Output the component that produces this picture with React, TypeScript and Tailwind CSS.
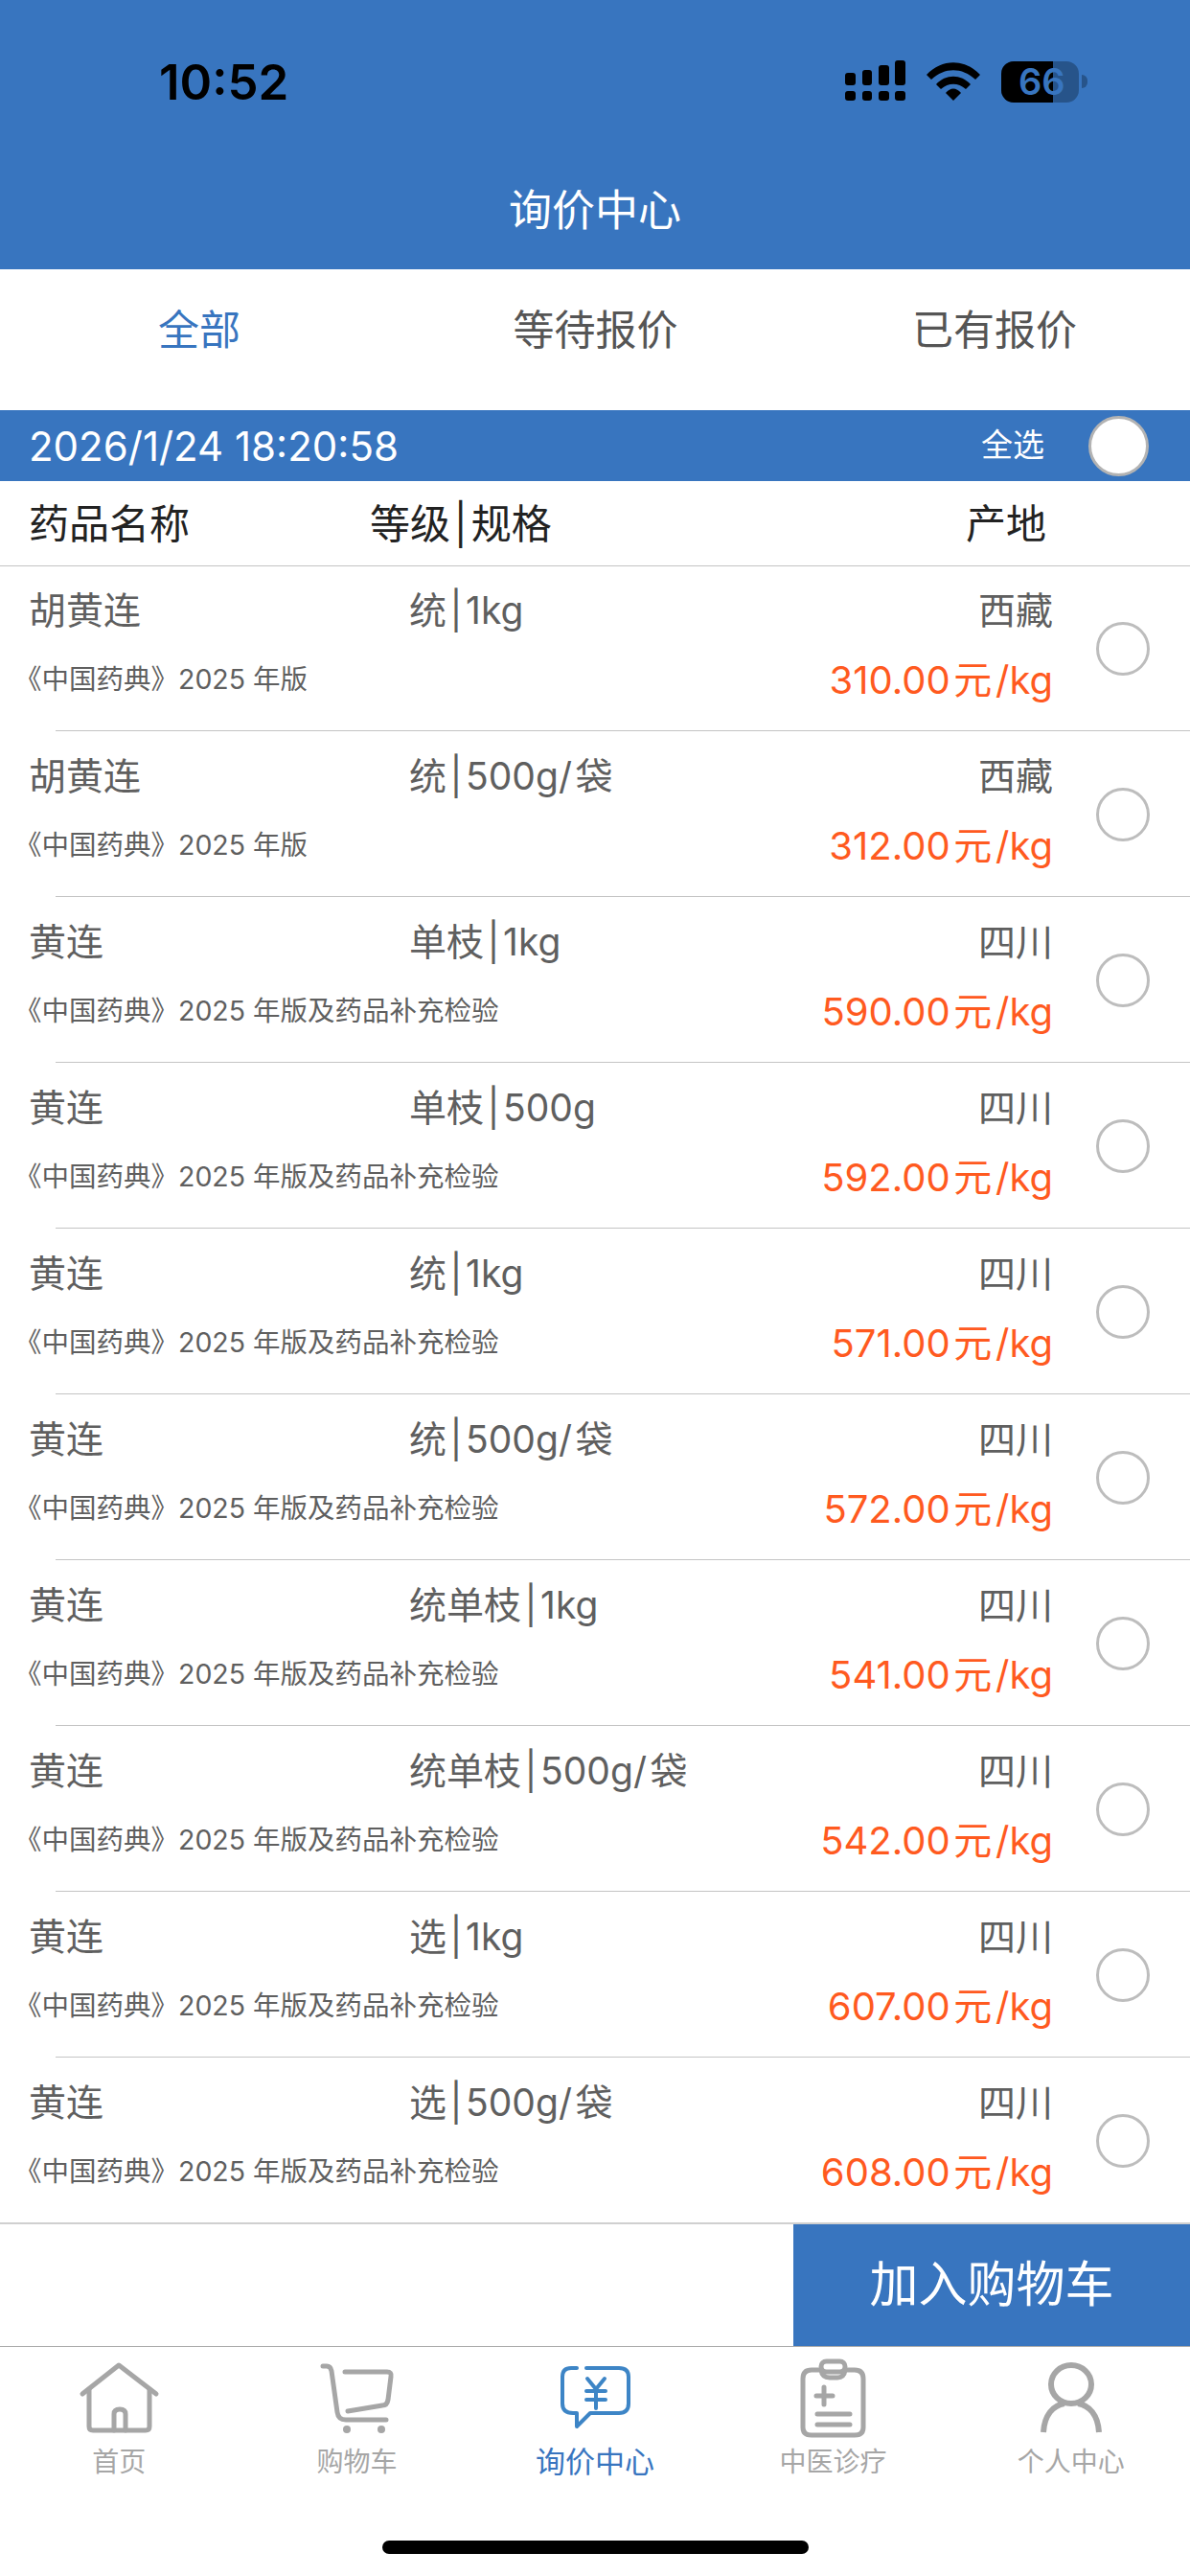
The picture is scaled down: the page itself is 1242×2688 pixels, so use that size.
const rows = [
  { name: "胡黄连", spec: "统\u200a|\u200a1kg", origin: "西藏", std: "《中国药典》2025 年版", price: "310.00" },
  { name: "胡黄连", spec: "统\u200a|\u200a500g/\u200a袋", origin: "西藏", std: "《中国药典》2025 年版", price: "312.00" },
  { name: "黄连", spec: "单枝\u200a|\u200a1kg", origin: "四川", std: "《中国药典》2025 年版及药品补充检验", price: "590.00" },
  { name: "黄连", spec: "单枝\u200a|\u200a500g", origin: "四川", std: "《中国药典》2025 年版及药品补充检验", price: "592.00" },
  { name: "黄连", spec: "统\u200a|\u200a1kg", origin: "四川", std: "《中国药典》2025 年版及药品补充检验", price: "571.00" },
  { name: "黄连", spec: "统\u200a|\u200a500g/\u200a袋", origin: "四川", std: "《中国药典》2025 年版及药品补充检验", price: "572.00" },
  { name: "黄连", spec: "统单枝\u200a|\u200a1kg", origin: "四川", std: "《中国药典》2025 年版及药品补充检验", price: "541.00" },
  { name: "黄连", spec: "统单枝\u200a|\u200a500g/\u200a袋", origin: "四川", std: "《中国药典》2025 年版及药品补充检验", price: "542.00" },
  { name: "黄连", spec: "选\u200a|\u200a1kg", origin: "四川", std: "《中国药典》2025 年版及药品补充检验", price: "607.00" },
  { name: "黄连", spec: "选\u200a|\u200a500g/\u200a袋", origin: "四川", std: "《中国药典》2025 年版及药品补充检验", price: "608.00" },
];

function StatusIcons() {
  return (
    <div className="flex items-center">
      {/* signal */}
      <svg width="64" height="44" viewBox="0 0 64 44" fill="#000">
        <rect x="0" y="13" width="11" height="13" rx="3" />
        <rect x="18" y="10" width="10" height="16" rx="3" />
        <rect x="35" y="5" width="11" height="21" rx="3" />
        <rect x="52" y="0" width="11" height="26" rx="3" />
        <rect x="0" y="32" width="11" height="10" rx="3" />
        <rect x="18" y="32" width="10" height="10" rx="3" />
        <rect x="35" y="32" width="11" height="10" rx="3" />
        <rect x="52" y="32" width="11" height="10" rx="3" />
      </svg>
      {/* wifi */}
      <svg className="ml-[21px]" width="56" height="42" viewBox="0 0 56 42" fill="#000">
        <path d="M0 14 C16 -3 40 -3 56 14 L51 19 C37 6 19 6 5 19 Z" />
        <path d="M10 24 C20 13 36 13 46 24 L41 29 C33 22 23 22 15 29 Z" />
        <path d="M20 33 C25 27 31 27 36 33 L28 41 Z" />
      </svg>
      {/* battery */}
      <div className="ml-[22px] relative w-[81px] h-[43px] rounded-[13px] bg-[#27548a]">
        <div className="h-full w-[54px] rounded-l-[13px] bg-black" />
        <div className="absolute left-[18px] top-0 text-[#3875bf] text-[38px] font-semibold leading-[43px]">
          66
        </div>
      </div>
      <div className="ml-[3px] w-[6px] h-[14px] rounded-r-[6px] bg-[#27548a]" />
    </div>
  );
}

function Radio({ white }: { white?: boolean }) {
  return (
    <div
      className={
        white
          ? "w-[63px] h-[63px] rounded-full bg-white border-[3px] border-[#b3b3b3]"
          : "w-[56px] h-[56px] rounded-full bg-white border-[3px] border-[#bdbdbd]"
      }
    />
  );
}

function TabItem({ label, active, children }: { label: string; active?: boolean; children: React.ReactNode }) {
  return (
    <div className="flex flex-col items-center">
      {children}
      <span className={active ? "mt-[5px] text-[31px] leading-[40px] text-[#3875bf]" : "mt-[5px] text-[28px] leading-[40px] text-[#a6a6a6]"}>
        {label}
      </span>
    </div>
  );
}

export default function App() {
  return (
    <div className="w-[1242px] h-[2688px] bg-white overflow-hidden [font-family:Inter,'Noto_Sans_CJK_SC',sans-serif]">
      {/* header */}
      <div className="h-[281px] bg-[#3875bf] flex flex-col">
        <div className="h-[170px] flex items-center justify-between pl-[166px] pr-[107px]">
          <span className="text-[51px] font-semibold text-black leading-none">10:52</span>
          <StatusIcons />
        </div>
        <div className="flex-1 flex items-start justify-center pt-[25px]">
          <span className="text-[45px] leading-[50px] text-white">询价中心</span>
        </div>
      </div>

      {/* tabs */}
      <div className="h-[147px] grid grid-cols-3 items-center text-center text-[43px] text-[#555555] pb-[21px]">
        <span className="pl-[2px] text-[#3875bf]">全部</span>
        <span className="pl-[1px]">等待报价</span>
        <span className="pl-[6px]">已有报价</span>
      </div>

      {/* date bar */}
      <div className="h-[74px] bg-[#3875bf] flex items-center pl-[30px] pr-[43px] text-white">
        <span className="text-[42px]">2026/1/24 18:20:58</span>
        <span className="ml-auto mr-[46px] text-[33px]">全选</span>
        <Radio white />
      </div>

      {/* column titles */}
      <div className="h-[89px] flex items-center border-b border-[#c4c4c4] text-[42px] text-[#222222]">
        <span className="ml-[30px] w-[356px]">药品名称</span>
        <span>等级{"\u200a"}|{"\u200a"}规格</span>
        <span className="ml-auto mr-[150px]">产地</span>
      </div>

      {/* list */}
      <div>
        {rows.map((row, i) => (
          <div key={i} className="h-[173px] relative flex items-center">
            <div className="flex-1 pl-[30px] pr-[45px] pb-[8px]">
              <div className="h-[58px] flex items-center text-[39px] text-[#5f5f5f]">
                <span className="w-[397px]">{row.name}</span>
                <span>{row.spec}</span>
                <span className="ml-auto">{row.origin}</span>
              </div>
              <div className="mt-[14px] h-[58px] flex items-center justify-between">
                <span className="text-[28.5px] text-[#5f5f5f] -ml-[15px]">{row.std}</span>
                <span className="text-[40px] text-[#ff5a1f]">{row.price}{"\u200a"}元{"\u200a"}/kg</span>
              </div>
            </div>
            <div className="mr-[42px] pb-[2px]">
              <Radio />
            </div>
            <div className={i === rows.length - 1 ? "absolute bottom-0 left-0 right-0 h-[2px] bg-[#d0d0d0]" : "absolute bottom-[1px] left-[58px] right-0 h-[1px] bg-[#c4c4c4]"} />
          </div>
        ))}
      </div>

      {/* add to cart */}
      <div className="h-[128px] flex justify-end border-b border-[#aaaaaa]">
        <div className="w-[414px] bg-[#3875bf] flex items-center justify-center text-white text-[51px]">
          加入购物车
        </div>
      </div>

      {/* bottom tabs */}
      <div className="h-[202px] grid grid-cols-5 items-start pt-[11px]">
        <TabItem label="首页">
          <svg width="90" height="84" viewBox="0 0 90 84" fill="none" stroke="#a6a6a6" strokeWidth="5" strokeLinecap="round" strokeLinejoin="round">
            <path d="M7 38 L45 8 L84 38" />
            <path d="M14 33 V72 Q14 76 18 76 H73 Q77 76 77 72 V33" />
            <path d="M40 76 V59 Q40 54 46 54 Q52 54 52 59 V76" />
          </svg>
        </TabItem>
        <TabItem label="购物车">
          <svg width="90" height="84" viewBox="0 0 90 84" fill="none" stroke="#a6a6a6" strokeWidth="5" strokeLinecap="round" strokeLinejoin="round">
            <path d="M9 9 H13 Q17 9 18 14 L24 57 Q25 65 33 65 H75" />
            <path d="M32 15 H76 Q81 15 80 20 L77 44 Q76 50 71 50 L35 56" />
            <circle cx="34" cy="75" r="4" fill="#a6a6a6" stroke="none" />
            <circle cx="70" cy="75" r="4" fill="#a6a6a6" stroke="none" />
          </svg>
        </TabItem>
        <TabItem label="询价中心" active>
          <svg width="90" height="84" viewBox="0 0 90 84" fill="none" stroke="#3d85c6" strokeWidth="4" strokeLinecap="round" strokeLinejoin="round">
            <path d="M26 11 H20 Q11 11 11 20 V48 Q11 58 22 58 H26 V72 L40 58 H70 Q80 58 80 48 V20 Q80 11 70 11 H36" />
            <path d="M37 22 L46 33 L55 22 M46 33 V53 M36 35 H56 M36 44 H56" />
          </svg>
        </TabItem>
        <TabItem label="中医诊疗">
          <svg width="90" height="84" viewBox="0 0 90 84" fill="none" stroke="#a6a6a6" strokeWidth="5" strokeLinecap="round" strokeLinejoin="round">
            <path d="M33 13 H23 Q14 13 14 22 V73 Q14 81 23 81 H68 Q77 81 77 73 V22 Q77 13 68 13 H58" />
            <path d="M33 13 Q34 21 42 21 H50 Q57 21 58 13" />
            <rect x="33" y="4" width="25" height="11" rx="5.5" />
            <path d="M28 40 H45 M36 31 V49 M29 59 H63 M29 70 H63" />
          </svg>
        </TabItem>
        <TabItem label="个人中心">
          <svg width="90" height="84" viewBox="0 0 90 84" fill="none" stroke="#a6a6a6" strokeWidth="6">
            <ellipse cx="45" cy="28" rx="21" ry="20" />
            <path d="M16 78 C17 60 26 50 38 48 M74 78 C73 60 64 50 52 48" />
          </svg>
        </TabItem>
      </div>

      {/* home indicator */}
      <div className="mx-auto w-[445px] h-[14px] rounded-full bg-black" />
    </div>
  );
}
